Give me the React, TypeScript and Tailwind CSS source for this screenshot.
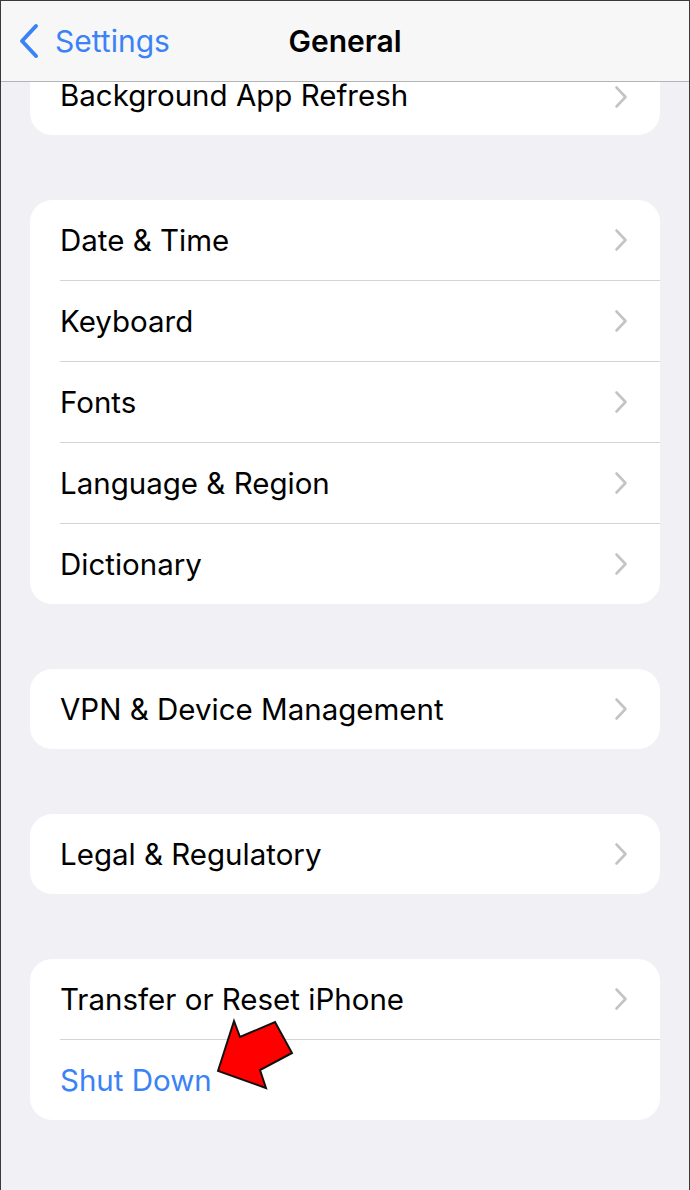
import { ReactNode } from "react"

function Chevron() {
  return (
    <svg width="14" height="24" viewBox="0 0 14 24" fill="none" className="shrink-0">
      <path d="M2.5 2.5 L11.5 12 L2.5 21.5" stroke="#c4c4c7" strokeWidth="2.6" strokeLinecap="round" strokeLinejoin="round" />
    </svg>
  )
}

function Row({ label, last, blue, chevron = true }: { label: string; last?: boolean; blue?: boolean; chevron?: boolean }) {
  return (
    <div className="pl-[30px]">
      <div className={`flex items-center justify-between pr-[32px] ${last ? "h-[80px]" : "h-[81px] border-b border-[#d4d4d8]"}`}>
        <span className={`text-[29.5px] ${blue ? "text-[#3a82f6]" : "text-black"}`}>{label}</span>
        {chevron && <Chevron />}
      </div>
    </div>
  )
}

function Card({ children }: { children: ReactNode }) {
  return <div className="bg-white rounded-[22px] overflow-hidden">{children}</div>
}

export default function App() {
  return (
    <div className="w-[690px] h-[1190px] bg-[#f0f0f5] border-l border-r border-t border-[#3a3a3a] overflow-hidden" style={{ fontFamily: "Inter, 'Noto Sans', sans-serif" }}>
      <header className="h-[81px] bg-[#f7f7f7] border-b border-[#b4b4b4] flex items-center relative">
        <div className="flex items-center pl-[16px] gap-[14px] text-[#3a82f6]">
          <svg width="24" height="36" viewBox="0 0 24 36" fill="none">
            <path d="M19 3 L5 18 L19 33" stroke="#3a82f6" strokeWidth="4" strokeLinecap="round" strokeLinejoin="round" />
          </svg>
          <span className="text-[30px]">Settings</span>
        </div>
        <h1 className="absolute left-1/2 -translate-x-1/2 text-[30px] font-semibold text-black">General</h1>
      </header>

      <main className="px-[29px] flex flex-col gap-[65px]">
        <div className="bg-white rounded-b-[22px] h-[53px] flex items-start justify-between pl-[30px] pr-[32px]">
          <span className="text-[29.5px] text-black -mt-[5px] leading-[36px]">Background App Refresh</span>
          <div className="mt-[3px]"><Chevron /></div>
        </div>

        <Card>
          <Row label="Date & Time" />
          <Row label="Keyboard" />
          <Row label="Fonts" />
          <Row label="Language & Region" />
          <Row label="Dictionary" last />
        </Card>

        <Card>
          <Row label="VPN & Device Management" last />
        </Card>

        <Card>
          <Row label="Legal & Regulatory" last />
        </Card>

        <Card>
          <Row label="Transfer or Reset iPhone" />
          <div className="relative">
            <Row label="Shut Down" last blue chevron={false} />
            <svg className="absolute left-[180px] -top-[30px]" width="90" height="90" viewBox="0 0 90 90">
              <path d="M8 61 L24 11 L30 27 L65 12 L82 43 L50 60 L56 78 Z" fill="#ff0000" stroke="#111" strokeWidth="2" strokeLinejoin="miter" />
            </svg>
          </div>
        </Card>
      </main>
    </div>
  )
}
